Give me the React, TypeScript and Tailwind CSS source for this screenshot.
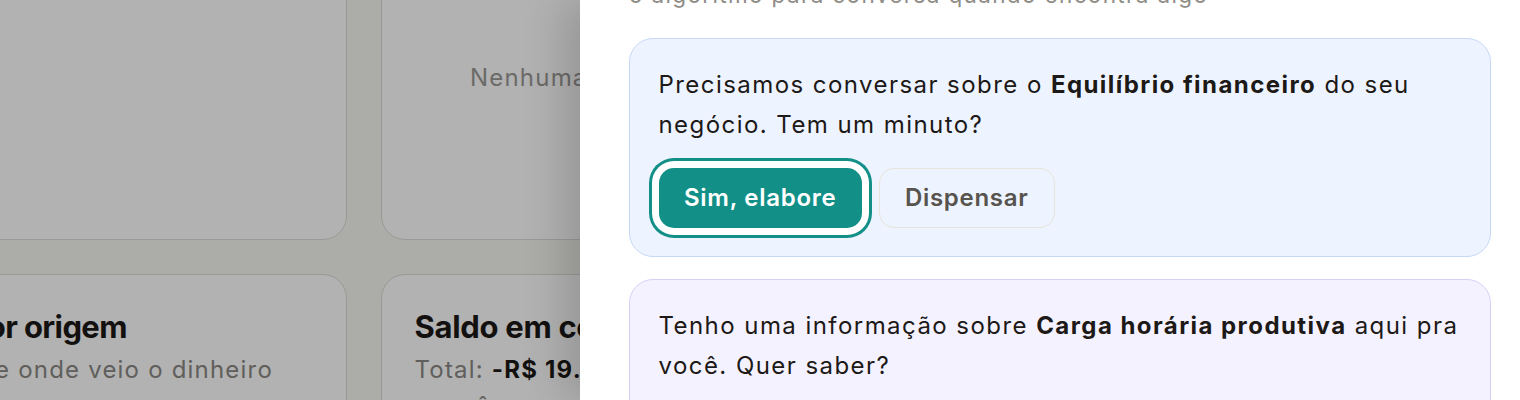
import React from "react";

function BgCard({ className = "", children }: { className?: string; children?: React.ReactNode }) {
  return (
    <div className={"rounded-[24px] border-[1.5px] border-[#dedcd7] bg-white " + className}>{children}</div>
  );
}

export default function App() {
  return (
    <div
      className="relative w-[1520px] h-[400px] overflow-hidden bg-[#f7f6f3]"
      style={{ fontFamily: "Inter, 'Noto Sans', sans-serif" }}
    >
      {/* background dashboard */}
      <div className="-ml-[181px] -mt-[60px] grid grid-cols-[528px_560px_400px] gap-x-[34px] gap-y-[34px]">
        <BgCard className="h-[300px]" />
        <BgCard className="h-[300px] pl-[88px] pt-[120px]">
          <span className="text-[24px] leading-[34px] tracking-[0.05em] text-[#9a9995] whitespace-nowrap">
            Nenhuma despesa no período
          </span>
        </BgCard>
        <BgCard className="h-[300px]" />
        <BgCard className="h-[300px] pt-[30px] px-[32.5px]">
          <div className="text-[31px] leading-[44px] font-bold tracking-[-0.02em] text-[#1c1917] whitespace-nowrap">
            Receita por origem
          </div>
          <div className="mt-[4px] text-[24px] leading-[34px] tracking-[0.05em] text-[#8a8884] whitespace-nowrap">
            Descubra de onde veio o dinheiro
          </div>
        </BgCard>
        <BgCard className="h-[300px] pt-[30px] px-[32.5px]">
          <div className="text-[31px] leading-[44px] font-bold tracking-[-0.01em] text-[#1c1917] whitespace-nowrap">
            Saldo em conta
          </div>
          <div className="mt-[4px] text-[24px] leading-[34px] tracking-[0.05em] text-[#8a8884] whitespace-nowrap">
            Total: <span className="font-bold text-[#1c1917]">-R$ 19.482,10</span>
          </div>
          <div className="mt-[2px] text-[24px] leading-[34px] tracking-[0.05em] text-[#8a8884] whitespace-nowrap">
            no mês corrente
          </div>
        </BgCard>
        <BgCard className="h-[300px]" />
      </div>

      {/* overlay */}
      <div className="absolute inset-0 bg-black/30" />

      {/* side panel */}
      <div className="absolute right-0 top-0 h-full w-[940px] bg-white shadow-[-16px_0_40px_rgba(0,0,0,0.16)] pl-[49px] pr-[29px]">
        <div className="-mt-[20px] text-[22.5px] leading-[30px] tracking-[0.06em] text-[#8f8c86] whitespace-nowrap">
          o algoritmo para conversa quando encontra algo
        </div>
        <div className="mt-[28px] flex flex-col gap-[22px]">
          <div className="rounded-[24px] border-[1.5px] border-[#c6d8f8] bg-[#eef4ff] px-[28.5px] pt-[26px] pb-[28px]">
            <p className="text-[24px] leading-[40px] tracking-[0.06em] text-[#1c1917] whitespace-nowrap">
              Precisamos conversar sobre o <span className="font-bold">Equilíbrio financeiro</span> do seu
              <br />
              negócio. Tem um minuto?
            </p>
            <div className="mt-[23px] flex items-center gap-[17px]">
              <button className="h-[60px] rounded-[15px] bg-[#128f87] px-[25.5px] text-[24px] font-semibold tracking-[0.03em] text-white ring-[3px] ring-[#128f87] ring-offset-[7px] ring-offset-white">
                Sim, elabore
              </button>
              <button className="h-[60px] rounded-[15px] border-[1.5px] border-[#e8e3da] bg-transparent px-[25px] text-[24px] font-semibold tracking-[0.03em] text-[#57534e]">
                Dispensar
              </button>
            </div>
          </div>
          <div className="h-[200px] rounded-[24px] border-[1.5px] border-[#d9cff8] bg-[#f4f2fe] px-[28.5px] pt-[26px]">
            <p className="text-[24px] leading-[40px] tracking-[0.06em] text-[#1c1917] whitespace-nowrap">
              Tenho uma informação sobre <span className="font-bold">Carga horária produtiva</span> aqui pra
              <br />
              você. Quer saber?
            </p>
          </div>
        </div>
      </div>
    </div>
  );
}
